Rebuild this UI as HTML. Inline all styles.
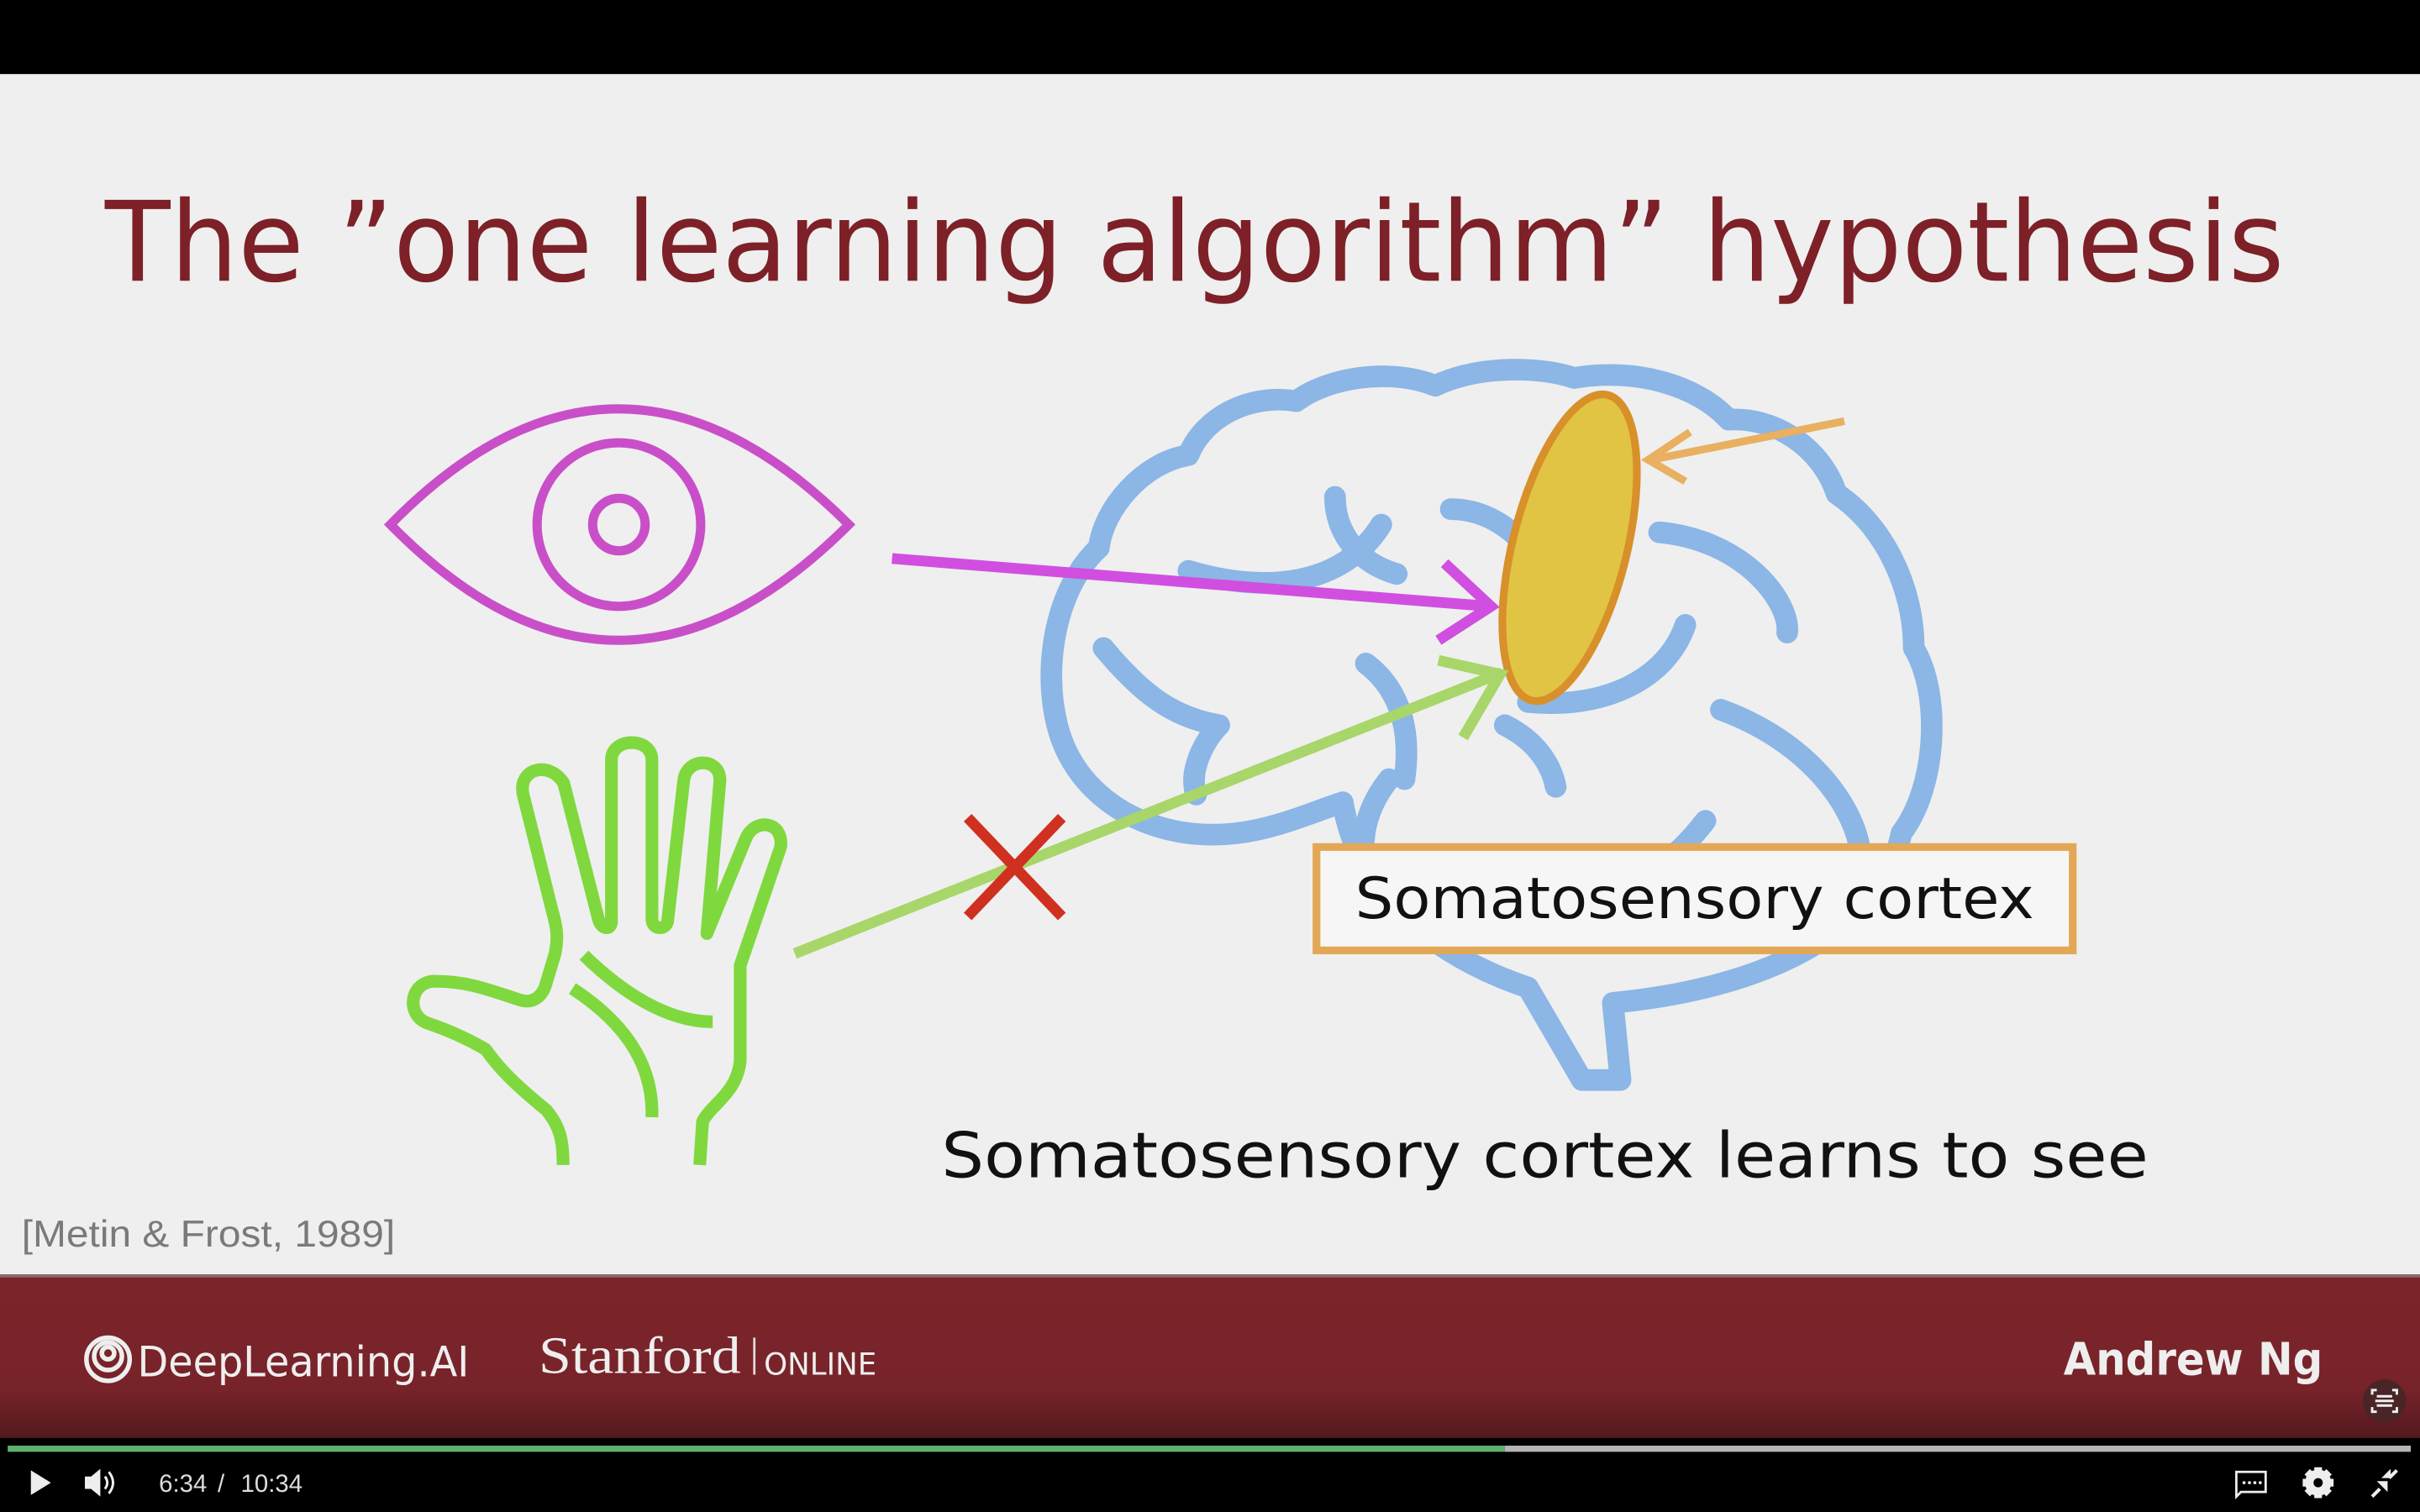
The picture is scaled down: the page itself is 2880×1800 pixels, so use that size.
<!DOCTYPE html>
<html><head><meta charset="utf-8"><style>html,body{margin:0;padding:0;background:#000;overflow:hidden}svg{display:block}</style></head>
<body>
<svg width="2880" height="1800" viewBox="0 0 1568 980" xmlns="http://www.w3.org/2000/svg">
<defs>
<linearGradient id="ft" x1="0" y1="0" x2="0" y2="1">
<stop offset="0" stop-color="#7c252b"/><stop offset="0.7" stop-color="#772329"/><stop offset="1" stop-color="#521a1e"/>
</linearGradient>
</defs>
<rect width="1568" height="980" fill="#000"/>
<rect x="0" y="48" width="1568" height="780" fill="#efefef"/>
<text x="68" y="182" font-family="DejaVu Sans, sans-serif" font-size="72" fill="#7d2027" textLength="1412" lengthAdjust="spacingAndGlyphs">The ”one learning algorithm” hypothesis</text>

<g fill="none" stroke="#c94fc9" stroke-width="6">
<path d="M253 340 Q400 190 550 340 Q400 490 253 340 Z"/>
<circle cx="401" cy="340" r="53"/>
<circle cx="401" cy="340" r="17"/>
</g>

<g fill="none" stroke="#8bb6e6" stroke-width="14" stroke-linecap="round" stroke-linejoin="round">
<path d="M1050 700 L1045 650 C1150 640 1220 600 1232 540 C1255 510 1258 450 1240 420 C1240 380 1220 340 1190 320 C1180 290 1150 270 1120 272 C1100 250 1060 238 1020 245 C1000 238 960 236 930 250 C900 238 860 245 840 260 C810 255 780 270 770 295 C740 300 715 330 712 355 C685 380 675 430 685 470 C695 510 730 535 770 540 C810 545 840 530 870 520 C880 580 930 620 990 640 L1025 700 Z"/>
<path d="M770 370 C820 385 870 380 895 340"/>
<path d="M865 322 C865 345 880 365 905 372"/>
<path d="M940 330 C960 330 975 340 985 350"/>
<path d="M715 420 C740 450 760 465 790 470 C780 480 770 500 775 515"/>
<path d="M885 430 C905 445 915 470 910 505"/>
<path d="M1075 345 C1130 350 1160 390 1158 410"/>
<path d="M1092 405 C1080 440 1040 460 990 455"/>
<path d="M1115 460 C1170 480 1200 520 1205 550"/>
<path d="M975 470 C995 480 1005 495 1008 510"/>
<path d="M1105 532 C1095 545 1085 555 1070 565"/>
<path d="M900 505 C880 530 878 560 895 590"/>
</g>

<ellipse cx="1017" cy="355" rx="37" ry="102" transform="rotate(14 1017 355)" fill="#e2c444" stroke="#d8902a" stroke-width="5"/>

<g fill="none" stroke="#e8b060" stroke-width="5">
<path d="M1195 273 L1070 298"/>
<path d="M1095 280 L1068 298 L1092 312"/>
</g>
<g fill="none" stroke="#d14fe0" stroke-width="7">
<path d="M578 362 L965 393"/>
<path d="M936 365 L966 393 L932 415"/>
</g>
<g fill="none" stroke="#a8d66a" stroke-width="7">
<path d="M515 618 L973 436"/>
<path d="M932 428 L972 437 L948 478"/>
</g>
<g stroke="#d03020" stroke-width="7">
<path d="M627 530 L688 594 M688 530 L627 594"/>
</g>

<g transform="translate(239.6 468.2) scale(0.1875)" fill="none" stroke="#80d83f" stroke-width="44" stroke-linejoin="round">
<path d="M668 1530 C668 1450 660 1400 610 1340 C500 1250 450 1200 400 1130 C330 1090 260 1060 200 1040 C120 1010 140 890 230 895 C330 895 400 920 520 960 C570 975 600 940 610 900 L640 800 C650 750 650 720 630 650 L530 250 C510 160 620 130 670 210 L790 680 C800 720 840 720 835 680 L835 130 C835 50 975 50 975 130 L975 680 C975 720 1030 720 1030 680 L1085 200 C1095 120 1210 120 1210 200 L1165 730 L1300 400 C1330 330 1430 340 1420 430 L1280 840 L1280 1170 C1270 1280 1180 1320 1150 1380 L1140 1530"/>
<path d="M740 805 C900 960 1050 1035 1185 1035"/>
<path d="M700 920 C900 1050 980 1200 975 1365"/>
</g>

<rect x="853" y="549" width="490" height="67" fill="#f6f6f6" stroke="#e3a857" stroke-width="5"/>
<text x="878" y="595" font-family="DejaVu Sans, sans-serif" font-size="37" fill="#111" textLength="440" lengthAdjust="spacingAndGlyphs">Somatosensory cortex</text>
<text x="610" y="763" font-family="DejaVu Sans, sans-serif" font-size="41" fill="#111" textLength="782" lengthAdjust="spacingAndGlyphs">Somatosensory cortex learns to see</text>
<text x="14" y="808" font-family="Liberation Sans, sans-serif" font-size="24" fill="#7a7a7a" textLength="242" lengthAdjust="spacingAndGlyphs">[Metin &amp; Frost, 1989]</text>

<rect x="0" y="826" width="1568" height="106" fill="url(#ft)"/>
<rect x="0" y="826" width="1568" height="2" fill="#8a6a6c"/>
<g fill="none" stroke="#eee" stroke-width="3">
<circle cx="70" cy="881" r="14"/>
<circle cx="70" cy="879" r="9"/>
<circle cx="70" cy="877" r="4"/>
</g>
<text x="89" y="892" font-family="DejaVu Sans, sans-serif" font-size="27" fill="#eee" textLength="215" lengthAdjust="spacingAndGlyphs">DeepLearning.AI</text>
<text x="349" y="890" font-family="Liberation Serif, serif" font-size="34" fill="#eee" textLength="131" lengthAdjust="spacingAndGlyphs">Stanford</text>
<rect x="488" y="867" width="1.5" height="24" fill="#ddd"/>
<text x="495" y="891" font-family="DejaVu Sans, sans-serif" font-size="20" fill="#eee" textLength="73" lengthAdjust="spacingAndGlyphs">ONLINE</text>
<text x="1505" y="891" text-anchor="end" font-family="DejaVu Sans, sans-serif" font-weight="bold" font-size="29" fill="#eee" textLength="168" lengthAdjust="spacingAndGlyphs">Andrew Ng</text>
<circle cx="1545" cy="908" r="14" fill="#4a2528"/>
<g fill="none" stroke="#eee" stroke-width="1.6">
<path d="M1537 904 V901 H1540 M1550 901 H1553 V904 M1553 912 V915 H1550 M1540 915 H1537 V912"/>
<path d="M1540 905 H1550 M1539 908 H1551 M1540 911 H1550"/>
</g>

<rect x="5" y="937" width="970" height="4" fill="#5fb070"/>
<rect x="975" y="937" width="587" height="4" fill="#b5b5b5"/>

<path d="M20 953 L33 961 L20 969 Z" fill="#eee"/>
<path d="M55 957 H59 L65 952 V970 L59 965 H55 Z" fill="#eee"/>
<g fill="none" stroke="#eee" stroke-width="1.6">
<path d="M68 957 Q71 961 68 965 M70.5 954 Q76 961 70.5 968"/>
</g>
<text x="103" y="967" font-family="Liberation Sans, sans-serif" font-size="16" fill="#ddd">6:34</text>
<text x="141" y="967" font-family="Liberation Sans, sans-serif" font-size="16" fill="#ddd">/</text>
<text x="156" y="967" font-family="Liberation Sans, sans-serif" font-size="16" fill="#ddd">10:34</text>
<g fill="none" stroke="#eee" stroke-width="1.5">
<path d="M1449 954 H1468 V967 H1452 L1449 970 Z"/>
</g>
<g fill="#eee"><circle cx="1454" cy="961" r="1"/><circle cx="1457.5" cy="961" r="1"/><circle cx="1461" cy="961" r="1"/><circle cx="1464.5" cy="961" r="1"/></g>
<g transform="translate(1502 961)">
<circle r="6.5" fill="none" stroke="#eee" stroke-width="4"/>
<g fill="#eee">
<rect x="-2.5" y="-10" width="5" height="20"/>
<rect x="-2.5" y="-10" width="5" height="20" transform="rotate(45)"/>
<rect x="-2.5" y="-10" width="5" height="20" transform="rotate(90)"/>
<rect x="-2.5" y="-10" width="5" height="20" transform="rotate(135)"/>
</g>
<circle r="3" fill="#000"/>
</g>
<g fill="none" stroke="#eee" stroke-width="2.2">
<path d="M1537 970 L1542 965 M1553 953 L1548 958"/>
</g>
<path d="M1540 960 L1547 960 L1547 967 Z" fill="#eee"/>
<path d="M1549 952 L1549 958 L1543 958 Z" fill="#eee"/>
</svg>
</body></html>
